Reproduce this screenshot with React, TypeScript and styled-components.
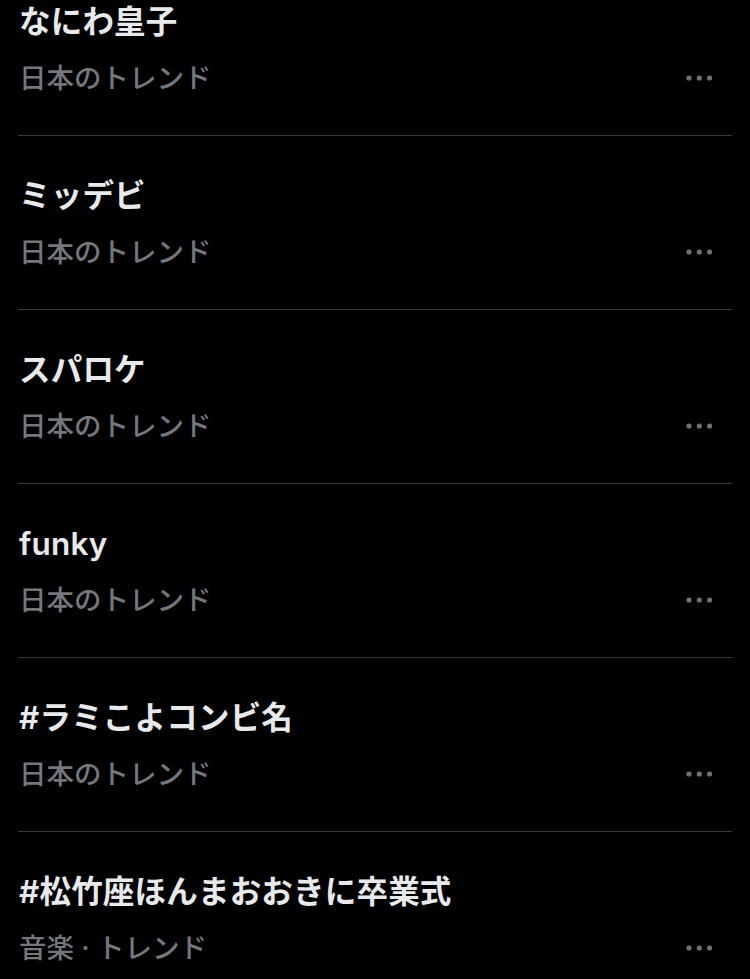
import React from 'react'
import styled, { createGlobalStyle } from 'styled-components'

const GlobalStyle = createGlobalStyle`
  html, body {
    margin: 0;
    padding: 0;
    background: #000;
    height: 100%;
    overflow: hidden;
  }
  body {
    font-family: Inter, "Noto Sans CJK JP", sans-serif;
  }
`

const trends = [
  { title: 'なにわ皇子', meta: '日本のトレンド' },
  { title: 'ミッデビ', meta: '日本のトレンド' },
  { title: 'スパロケ', meta: '日本のトレンド' },
  { title: 'funky', meta: '日本のトレンド' },
  { title: '#ラミこよコンビ名', meta: '日本のトレンド' },
  { title: '#松竹座ほんまおおきに卒業式', meta: '音楽 · トレンド' },
]

const List = styled.div`
  margin: -38px 18px 0;
`

const Row = styled.div`
  padding: 41px 20px 40px 1px;
  border-bottom: 1px solid #3a3a3c;
`

const Title = styled.div`
  font-size: 31.5px;
  line-height: 38px;
  font-weight: 600;
  color: #e7e9ea;
  letter-spacing: 0.2px;
`

const MetaLine = styled.div`
  margin-top: 20px;
  display: flex;
  align-items: center;
  justify-content: space-between;
`

const Meta = styled.span`
  font-size: 27.5px;
  line-height: 34px;
  font-weight: 500;
  color: #74777b;
`

const More = styled.svg`
  width: 26px;
  height: 8px;
  display: block;
  fill: #6e7276;
`

const Dots = () => (
  <More viewBox="0 0 26 8">
    <circle cx="3" cy="4" r="2.6" />
    <circle cx="13.3" cy="4" r="2.6" />
    <circle cx="23.6" cy="4" r="2.6" />
  </More>
)

export default function App() {
  return (
    <>
      <GlobalStyle />
      <List>
        {trends.map((t) => (
          <Row key={t.title}>
            <Title>{t.title}</Title>
            <MetaLine>
              <Meta>{t.meta}</Meta>
              <Dots />
            </MetaLine>
          </Row>
        ))}
      </List>
    </>
  )
}
